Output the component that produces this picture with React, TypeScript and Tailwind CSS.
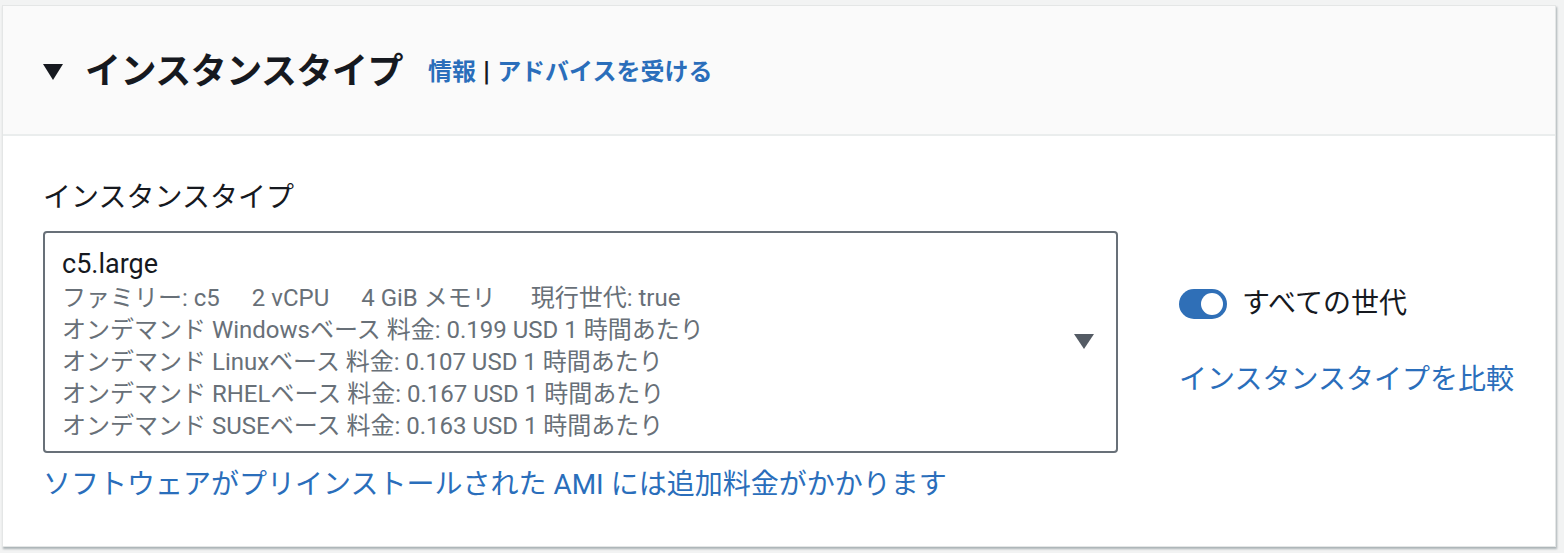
export default function App() {
  const lines = [
    'オンデマンド Windowsベース 料金: 0.199 USD 1 時間あたり',
    'オンデマンド Linuxベース 料金: 0.107 USD 1 時間あたり',
    'オンデマンド RHELベース 料金: 0.167 USD 1 時間あたり',
    'オンデマンド SUSEベース 料金: 0.163 USD 1 時間あたり',
  ];

  return (
    <div
      className="min-h-screen bg-[#f2f3f3] pt-[5px] pl-[2px]"
      style={{ fontFamily: 'Roboto, "Noto Sans CJK JP", sans-serif' }}
    >
      <div className="w-[1554px] bg-white border border-[#e4e6e6] shadow-[1px_2px_2px_rgba(0,28,36,0.3)]">
        {/* header */}
        <div className="h-[130px] bg-[#fafafa] border-b-2 border-[#eaeded] flex items-center pl-[40px] pt-[4px]">
          <svg width="20" height="16" viewBox="0 0 20 16" className="mr-[22px]">
            <path d="M0 0 H20 L10 16 Z" fill="#16191f" />
          </svg>
          <h2 className="text-[36px] font-bold text-[#16191f] tracking-[-0.5px]">インスタンスタイプ</h2>
          <div className="ml-[25px] flex items-center text-[24px] font-bold text-[#2a6ebb]">
            <span>情報</span>
            <span className="text-[#16191f] mx-[7px] text-[28px] leading-none font-bold">|</span>
            <span>アドバイスを受ける</span>
          </div>
        </div>

        {/* body */}
        <div className="pl-[40px] pt-[42px] pb-[41px] flex">
          <div>
            <div className="text-[28px] leading-[40px] text-[#16191f]">インスタンスタイプ</div>
            <div className="mt-[13px] w-[1075px] h-[222px] border-2 border-[#687078] rounded-[4px] pl-[17px] pr-[22px] pt-[13px] flex items-start">
              <div className="flex-1">
                <div className="text-[27px] leading-[36px] text-[#16191f]">c5.large</div>
                <div className="text-[24px] leading-[32px] text-[#687078]">
                  <div className="flex">
                    <span>ファミリー: c5</span>
                    <span className="ml-[32px]">2 vCPU</span>
                    <span className="ml-[32px]">4 GiB メモリ</span>
                    <span className="ml-[35px]">現行世代: true</span>
                  </div>
                  {lines.map((l) => (
                    <div key={l}>{l}</div>
                  ))}
                </div>
              </div>
              <svg width="20" height="15" viewBox="0 0 20 15" className="mt-[88px]">
                <path d="M0 0 H20 L10 15 Z" fill="#545b64" />
              </svg>
            </div>
            <div className="mt-[12px] text-[28px] leading-[40px] text-[#2a6ebb]">
              ソフトウェアがプリインストールされた AMI には追加料金がかかります
            </div>
          </div>

          <div className="ml-[61px] pt-[106px]">
            <div className="flex items-center">
              <div className="relative w-[48px] h-[30px] rounded-full bg-[#2f6fb7]">
                <div className="absolute right-[4px] top-[4px] w-[22px] h-[22px] rounded-full bg-white" />
              </div>
              <span className="ml-[15px] text-[28px] leading-[40px] text-[#16191f]">すべての世代</span>
            </div>
            <div className="mt-[36px] text-[28px] leading-[40px] text-[#2a6ebb]">インスタンスタイプを比較</div>
          </div>
        </div>
      </div>
    </div>
  );
}
